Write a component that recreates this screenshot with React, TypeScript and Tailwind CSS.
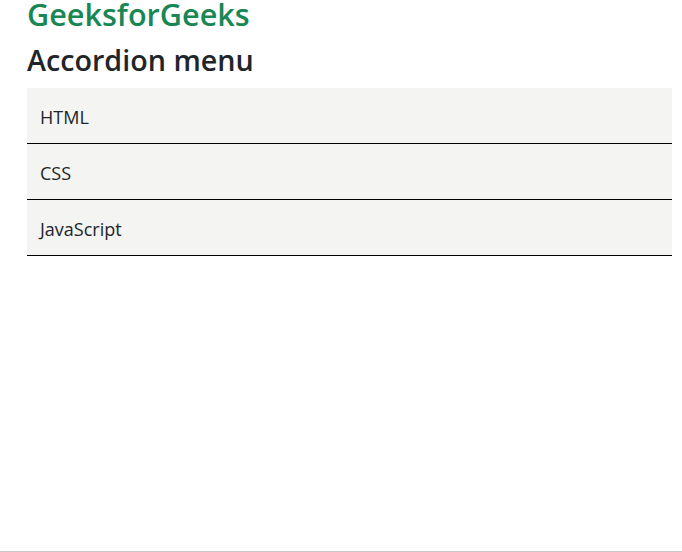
const items = ['HTML', 'CSS', 'JavaScript']

export default function App() {
    return (
        <div className="h-[552px] border-b border-[#c8c8c8] bg-white font-['Segoe_UI','Open_Sans',sans-serif] text-[#212529]">
            <div className="ml-[27px] w-[645px]">
                <h1 className="pt-[1px] text-[30.6px] leading-[27px] font-semibold text-[#198754]">GeeksforGeeks</h1>
                <h2 className="mt-[18px] mb-[14px] text-[28.7px] leading-[28px] font-semibold">Accordion menu</h2>

                {/* Accordion items */}
                <div>
                    {items.map(item => (
                        <div key={item} className="h-[56px] border-b border-black bg-[#f4f4f2] pl-[13px] pt-[17px]">
                            <span className="block text-[18px] leading-[24px]">{item}</span>
                        </div>
                    ))}
                </div>
            </div>
        </div>
    )
}
